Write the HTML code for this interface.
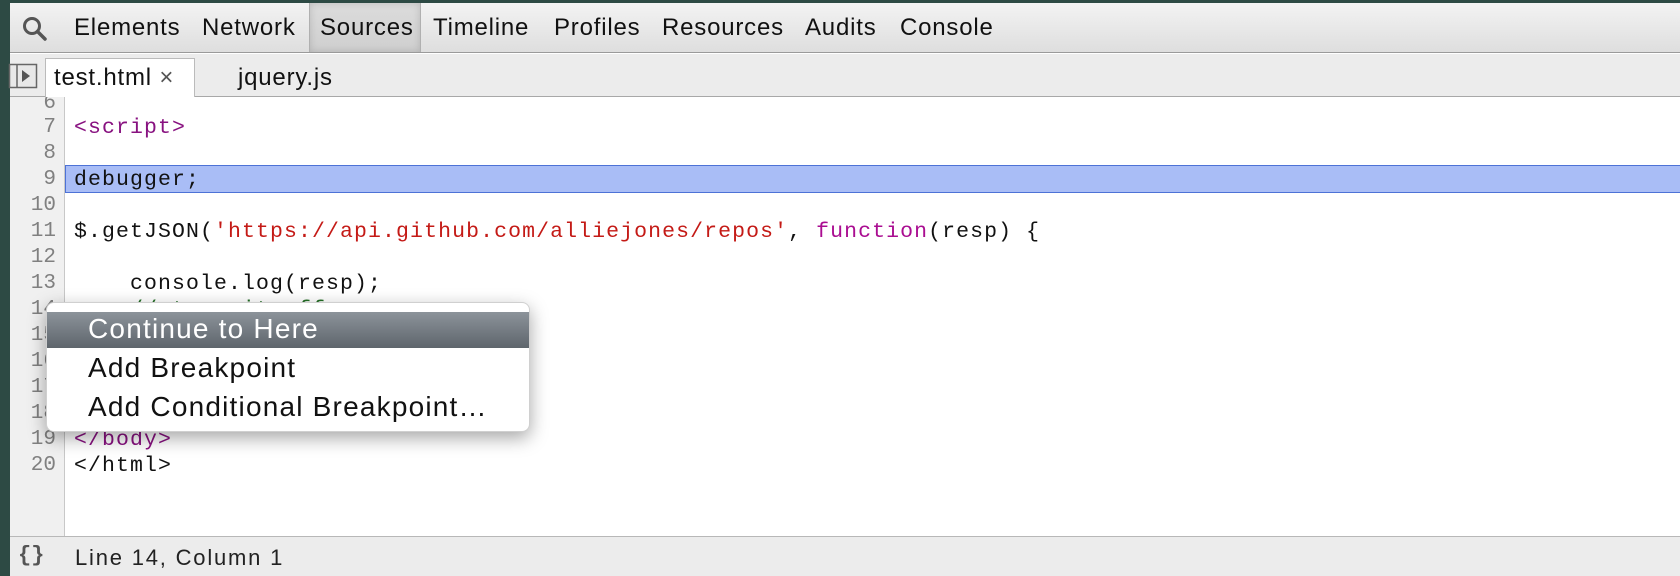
<!DOCTYPE html>
<html><head><meta charset="utf-8">
<style>
*{margin:0;padding:0;box-sizing:border-box}
body{width:1680px;height:576px;overflow:hidden;background:#2d4a44;font-family:"Liberation Sans",sans-serif;position:relative}
#win{position:absolute;left:10px;top:3px;right:0;bottom:0;background:#fff}
#tb{position:absolute;left:0;right:0;top:0;height:50px;background:linear-gradient(#f3f3f3,#dedede);border-bottom:1px solid #9a9a9a}
#tb span{position:absolute;top:11px;font-size:24px;letter-spacing:0.8px;color:#111}
#sel{position:absolute;left:299px;width:112px;top:0;height:49px;background:linear-gradient(#dcdcdc,#cfcfcf);border-left:1px solid #b0b0b0;border-right:1px solid #b0b0b0;box-shadow:inset 0 0 8px rgba(0,0,0,.15)}
#tabs{position:absolute;left:0;right:0;top:51px;height:43px;background:#ececec;border-bottom:1px solid #a8a8a8}
#tabs span{position:absolute;top:10px;font-size:24px;letter-spacing:0.8px;color:#111}
#t1{position:absolute;left:35px;top:4px;width:150px;height:39px;background:#fff;border:1px solid #bbb;border-bottom:none}
#gut{position:absolute;left:0;top:94px;width:55px;height:439px;background:#f0f0f0;border-right:1px solid #c8c8c8;overflow:hidden}
#code{position:absolute;left:55px;right:0;top:94px;height:439px;overflow:hidden}
.ln{position:absolute;right:8px;font-family:"Liberation Mono",monospace;font-size:21px;color:#808080;height:26px;line-height:26px}
.cl{position:absolute;left:9px;font-family:"Liberation Mono",monospace;font-size:21.5px;letter-spacing:1.1px;color:#111;height:26px;line-height:26px;white-space:pre}
.tag{color:#881280}.str{color:#c41a16}.kw{color:#aa0d91}.cm{color:#236e25}
#hl{position:absolute;left:0;right:-2px;top:68px;height:28px;background:#a9bdf6;border:1px solid #4d72d6}
#sb{position:absolute;left:0;right:0;top:533px;bottom:0;background:#ececec;border-top:1px solid #b8b8b8}
#menu{position:absolute;left:46px;top:302px;width:484px;height:130px;background:#fff;border-radius:8px;box-shadow:0 6px 18px rgba(0,0,0,.35);border:1px solid #d0d0d0}
.mi{position:absolute;left:41px;font-size:28px;letter-spacing:1.2px;color:#111}
#mh{position:absolute;left:0;right:0;top:9px;height:36px;background:linear-gradient(#8c939a,#5e656c)}
</style></head><body>
<div id="win">
 <div id="tb">
  <div id="sel"></div>
  <svg style="position:absolute;left:11px;top:12px" width="28" height="28" viewBox="0 0 28 28"><circle cx="11" cy="11" r="7.5" fill="none" stroke="#555" stroke-width="3"/><line x1="16.5" y1="16.5" x2="24" y2="24" stroke="#555" stroke-width="3.5" stroke-linecap="round"/></svg>
  <span style="left:64px">Elements</span>
  <span style="left:192px">Network</span>
  <span style="left:310px">Sources</span>
  <span style="left:423px">Timeline</span>
  <span style="left:544px">Profiles</span>
  <span style="left:652px">Resources</span>
  <span style="left:795px">Audits</span>
  <span style="left:890px">Console</span>
 </div>
 <div id="tabs">
  <svg style="position:absolute;left:-2px;top:9px" width="30" height="26" viewBox="0 0 30 26"><rect x="1.5" y="1.5" width="27" height="23" fill="#e8e8e8" stroke="#666" stroke-width="1.5"/><line x1="9" y1="1.5" x2="9" y2="24.5" stroke="#666" stroke-width="1.5"/><path d="M14 7 L22 13 L14 19 Z" fill="#555"/></svg>
  <div id="t1"></div>
  <span style="left:44px">test.html <span style="position:static;color:#555">×</span></span>
  <span style="left:228px">jquery.js</span>
 </div>
 <div id="gut">
  <div class="ln" style="top:-6px">6</div>
  <div class="ln" style="top:18px">7</div>
  <div class="ln" style="top:44px">8</div>
  <div class="ln" style="top:70px">9</div>
  <div class="ln" style="top:96px">10</div>
  <div class="ln" style="top:122px">11</div>
  <div class="ln" style="top:148px">12</div>
  <div class="ln" style="top:174px">13</div>
  <div class="ln" style="top:200px">14</div>
  <div class="ln" style="top:226px">15</div>
  <div class="ln" style="top:252px">16</div>
  <div class="ln" style="top:278px">17</div>
  <div class="ln" style="top:304px">18</div>
  <div class="ln" style="top:330px">19</div>
  <div class="ln" style="top:356px">20</div>
 </div>
 <div id="code">
  <div id="hl"></div>
  <div class="cl tag" style="top:18px">&lt;script&gt;</div>
  <div class="cl" style="top:70px">debugger;</div>
  <div class="cl" style="top:122px">$.getJSON(<span class="str">'https://api.github.com/alliejones/repos'</span>, <span class="kw">function</span>(resp) {</div>
  <div class="cl" style="top:174px">    console.log(resp);</div>
  <div class="cl cm" style="top:200px">    // turn it off</div>
  <div class="cl" style="top:226px">});</div>
  <div class="cl tag" style="top:278px">&lt;/script&gt;</div>
  <div class="cl tag" style="top:330px">&lt;/body&gt;</div>
  <div class="cl" style="top:356px">&lt;/html&gt;</div>
 </div>
 <div id="sb">
  <span style="position:absolute;left:8px;top:6px;font-family:'Liberation Mono',monospace;font-size:22px;font-weight:bold;color:#555">{}</span>
  <span style="position:absolute;left:65px;top:8px;font-size:22px;letter-spacing:1.8px;color:#222">Line 14, Column 1</span>
 </div>
</div>
<div id="menu">
 <div id="mh"></div>
 <div class="mi" style="top:10px;color:#fff">Continue to Here</div>
 <div class="mi" style="top:49px">Add Breakpoint</div>
 <div class="mi" style="top:88px">Add Conditional Breakpoint…</div>
</div>
</body></html>
